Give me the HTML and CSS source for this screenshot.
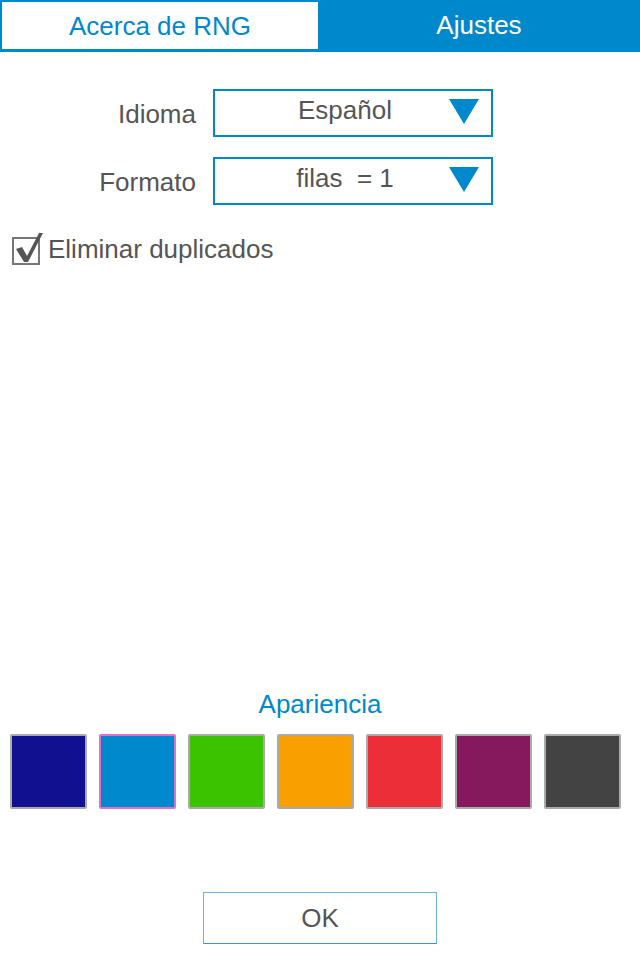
FILE: index.html
```html
<!DOCTYPE html>
<html lang="es">
<head>
    <meta charset="UTF-8">
    <title>Ajustes</title>
    <link rel="stylesheet" href="styles.css">
</head>
<body>
    <div id="tabs">
        <div class="tab tab-off">Acerca de RNG</div>
        <div class="tab tab-on">Ajustes</div>
    </div>

    <div id="settings">
        <div class="row">
            <label class="row-label">Idioma</label>
            <div class="select">
                <span class="select-value">Español</span>
                <span class="arrow"></span>
            </div>
        </div>
        <div class="row">
            <label class="row-label">Formato</label>
            <div class="select">
                <span class="select-value">filas&nbsp; = 1</span>
                <span class="arrow"></span>
            </div>
        </div>

        <div class="check-row">
            <span class="checkbox">
                <svg width="30" height="32" viewBox="0 0 30 32">
                    <path d="M3 18 L9 16 L14 25 L26 2 L30 2 L15 31 L11 31 Z" fill="#555"/>
                </svg>
            </span>
            <span>Eliminar duplicados</span>
        </div>
    </div>

    <div id="appearance">
        <div class="section-title">Apariencia</div>
        <div class="swatches">
            <div class="swatch" style="background:#101090"></div>
            <div class="swatch selected" style="background:#0088cc"></div>
            <div class="swatch" style="background:#3cc300"></div>
            <div class="swatch" style="background:#f9a000"></div>
            <div class="swatch" style="background:#eb2e38"></div>
            <div class="swatch" style="background:#86185e"></div>
            <div class="swatch" style="background:#434343"></div>
        </div>
    </div>

    <div id="footer">
        <button id="ok">OK</button>
    </div>
</body>
</html>
```

FILE: styles.css
```css
body {
    font-family: 'Liberation Sans', Arial, sans-serif;
    margin: 0;
    padding: 0;
    width: 640px;
    height: 960px;
    background: #fff;
    color: #555;
    display: flex;
    flex-direction: column;
}
#tabs {
    display: flex;
    height: 49px;
    border-bottom: 3px solid #0088cc;
}
.tab {
    flex: 1;
    display: flex;
    align-items: center;
    justify-content: center;
    font-size: 26px;
    padding-top: 2px;
}
.tab-off {
    color: #0088cc;
    background: #fff;
    border: 2px solid #0088cc;
    border-bottom: none;
    border-right: none;
    flex: 0 0 316px;
}
.tab-on {
    color: #fff;
    background: #0088cc;
}
#settings {
    padding-top: 37px;
}
.row {
    display: flex;
    align-items: center;
    height: 48px;
    margin-bottom: 20px;
}
.row-label {
    width: 196px;
    text-align: right;
    font-size: 26px;
    padding-top: 2px;
}
.select {
    margin-left: 17px;
    width: 276px;
    height: 44px;
    border: 2px solid #0088cc;
    display: flex;
    align-items: center;
}
.select-value {
    flex: 1;
    text-align: center;
    font-size: 26px;
    padding-left: 26px;
    margin-top: -6px;
}
.arrow {
    width: 0;
    height: 0;
    border-left: 15px solid transparent;
    border-right: 15px solid transparent;
    border-top: 25px solid #0088cc;
    margin-right: 12px;
    margin-top: -4px;
}
.check-row {
    display: flex;
    align-items: center;
    margin: 28px 0 0 12px; /* collapses with the row margin above */
    font-size: 26px;
    height: 32px;
}
.checkbox {
    width: 24px;
    height: 24px;
    border: 2px solid #777;
    margin-right: 8px;
    position: relative;
    margin-top: 3px;
}
.checkbox svg {
    position: absolute;
    left: -1px;
    top: -8px;
}
#appearance {
    margin-top: auto;
    text-align: center;
}
.section-title {
    color: #0088cc;
    font-size: 26px;
    margin-bottom: 14px;
    margin-top: -2px;
}
.swatches {
    display: flex;
    gap: 12px;
    padding-left: 10px;
}
.swatch {
    width: 73px;
    height: 71px;
    border: 2px solid #aaa;
    border-radius: 2px;
}
.swatch.selected {
    border-color: #e070d0;
}
#footer {
    display: flex;
    justify-content: center;
    padding: 83px 0 16px;
}
#ok {
    width: 234px;
    height: 52px;
    background: #fff;
    border: 1.5px solid #6ab4dc;
    border-bottom-color: #3a98c8;
    font-family: 'Liberation Sans', Arial, sans-serif;
    font-size: 26px;
    color: #555;
    padding: 0;
}
```
